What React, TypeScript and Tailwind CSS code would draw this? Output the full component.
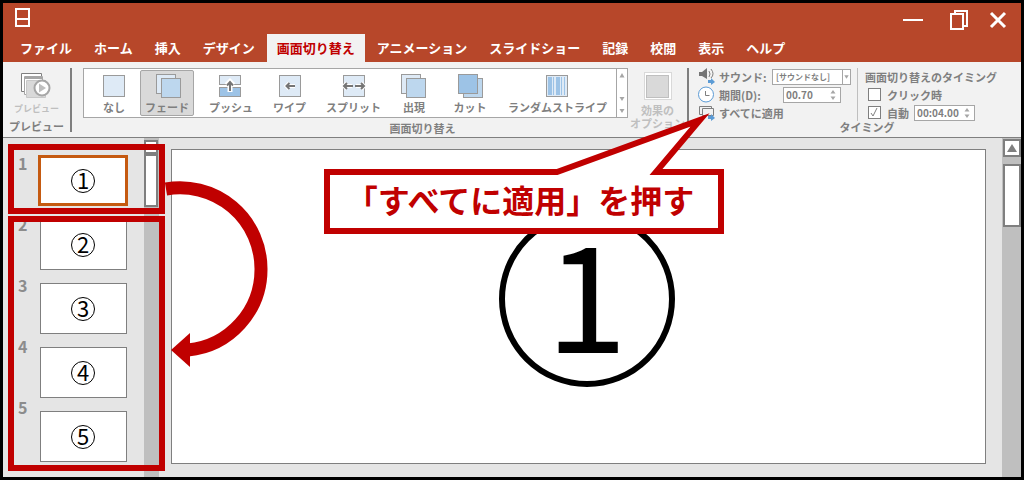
import { ReactNode } from "react";

const tabs = [
  "ファイル",
  "ホーム",
  "挿入",
  "デザイン",
  "画面切り替え",
  "アニメーション",
  "スライドショー",
  "記録",
  "校閲",
  "表示",
  "ヘルプ",
];

const slides = [1, 2, 3, 4, 5];

function Tile({ children }: { children: ReactNode }) {
  return (
    <svg viewBox="0 0 28 24" className="h-6 w-7 shrink-0" strokeWidth="1" stroke="#9a9a9a">
      {children}
    </svg>
  );
}

const transitions = [
  {
    name: "なし",
    width: "w-8",
    icon: <rect x="3.500" y="1.500" width="21" height="21" fill="#deeaf6" />,
  },
  {
    name: "フェード",
    width: "w-[54px]",
    icon: (
      <>
        <rect x="3.500" y="0.500" width="19" height="19" fill="#deeaf6" />
        <rect x="8.500" y="4.500" width="19" height="19" fill="#bdd7ee" />
      </>
    ),
  },
  {
    name: "プッシュ",
    width: "w-[54px]",
    icon: (
      <>
        <rect x="2.500" y="1.500" width="21" height="9" fill="#deeaf6" />
        <rect x="2.500" y="13.500" width="21" height="9" fill="#9dc3e6" />
        <path d="M13 18V8M9.500 11L13 7.500L16.500 11" fill="none" stroke="#fff" strokeWidth="5" />
        <path d="M13 17V9M10 11.500L13 8L16 11.500" fill="none" stroke="#757575" strokeWidth="2" />
      </>
    ),
  },
  {
    name: "ワイプ",
    width: "w-[43px]",
    icon: (
      <>
        <rect x="3.500" y="1.500" width="21" height="21" fill="#deeaf6" />
        <path d="M19 12H11M13.500 9L10.500 12L13.500 15" fill="none" stroke="#fff" strokeWidth="4" />
        <path d="M19 12H11M13.500 9L10.500 12L13.500 15" fill="none" stroke="#757575" strokeWidth="2" />
      </>
    ),
  },
  {
    name: "スプリット",
    width: "w-[65px]",
    icon: (
      <>
        <rect x="3.500" y="1.500" width="21" height="21" fill="#deeaf6" />
        <path d="M3 12H12M16 12H25M7 9L4 12L7 15M21 9L24 12L21 15" fill="none" stroke="#fff" strokeWidth="4" />
        <path d="M4 12H13M15 12H24M7 9L4 12L7 15M21 9L24 12L21 15" fill="none" stroke="#757575" strokeWidth="2" />
      </>
    ),
  },
  {
    name: "出現",
    width: "w-9",
    icon: (
      <>
        <rect x="1.500" y="0.500" width="19" height="19" fill="#deeaf6" />
        <rect x="6.500" y="4.500" width="19" height="19" fill="#bdd7ee" />
      </>
    ),
  },
  {
    name: "カット",
    width: "w-14",
    icon: (
      <>
        <rect x="7.500" y="4.500" width="19" height="19" fill="#bdd7ee" />
        <rect x="2.500" y="0.500" width="19" height="19" fill="#9dc3e6" />
      </>
    ),
  },
  {
    name: "ランダムストライプ",
    width: "w-[99px]",
    icon: (
      <>
        <rect x="2.500" y="1.500" width="21" height="21" fill="#deeaf6" />
        <path d="M4 3h4v18H4zM9 3h1v18H9zM12 3h4v18h-4zM17 3h1v18h-1zM20 3h1v18h-1z" fill="#9dc3e6" stroke="none" />
      </>
    ),
  },
];

function Spinner({ id, value, width }: { id: string; value: string; width: string }) {
  return (
    <span className={`flex h-4 items-center border border-[#a6a6a6] bg-white pr-1 ${width}`}>
      <input
        id={id}
        aria-label={id}
        defaultValue={value}
        className="w-full min-w-0 bg-transparent pl-[2px] text-[10px] leading-3 font-bold text-[#7f7f7f] outline-none"
      />
      <svg viewBox="0 0 6 12" className="h-3 w-[6px] shrink-0" fill="#a6a6a6">
        <path d="M3 1L5.500 4.500H0.500zM3 11L5.500 7.500H0.500z" />
      </svg>
    </span>
  );
}

function Titlebar() {
  return (
    <div className="flex h-[31px] items-start justify-between pt-[5px] pr-[14px] pl-3">
      <button aria-label="上書き保存">
        <svg viewBox="0 0 15 19" className="h-[19px] w-[15px]" fill="none" stroke="#fff" strokeWidth="2">
          <path d="M1 1h13v17H1zM1 11h13" />
        </svg>
      </button>
      <div className="flex items-start gap-5">
        <button aria-label="最小化" className="pr-[6px]">
          <svg viewBox="0 0 20 22" className="h-[22px] w-5" stroke="#fff" strokeWidth="2">
            <path d="M0 12H20" />
          </svg>
        </button>
        <button aria-label="元に戻す">
          <svg viewBox="0 0 20 22" className="h-[22px] w-5" fill="none" stroke="#fff" strokeWidth="2">
            <path d="M2 6h12v15H2zM6 6V3h12v15h-4" />
          </svg>
        </button>
        <button aria-label="閉じる">
          <svg viewBox="0 0 18 22" className="h-[22px] w-[18px]" fill="none" stroke="#fff" strokeWidth="3">
            <path d="M2 5L16 19M16 5L2 19" />
          </svg>
        </button>
      </div>
    </div>
  );
}

function Ribbon() {
  return (
    <div className="flex h-[76px] items-start border-b border-[#7f7f7f] bg-[#f2f2f2] pt-[6px] text-[11px] leading-3 font-bold whitespace-nowrap text-[#7f7f7f]">
      {/* Preview */}
      <section className="flex h-16 w-[67px] flex-col items-center pt-[5px]">
        <button className="flex flex-col items-center gap-1 text-[9px] leading-3 text-[#bfbfbf]">
          <svg viewBox="0 0 30 26" className="h-[26px] w-[30px]" fill="none" strokeWidth="1">
            <path d="M0.500 0.500h20v18h-20z" stroke="#7f7f7f" fill="#fff" />
            <path d="M3.500 3.500h18v18h-18z" stroke="#a6a6a6" fill="#fff" />
            <path d="M4 5h17" stroke="#a6a6a6" strokeWidth="2" />
            <path d="M5.500 7.500h19v17h-19z" stroke="#c8c8c8" fill="#d9d9d9" />
            <circle cx="21" cy="15" r="7.500" fill="#fff" stroke="#a6a6a6" strokeWidth="2" />
            <path d="M18 10.500L25 15L18 19.500z" fill="#bfbfbf" />
          </svg>
          プレビュー
        </button>
        <span className="mt-auto">プレビュー</span>
      </section>
      <div className="h-16 w-[2px] bg-[#7f7f7f]" />

      {/* Transition gallery */}
      <section className="ml-[11px] flex h-[66px] flex-col items-stretch justify-between">
        <div className="flex h-[50px] w-[545px] border border-[#a6a6a6] bg-white">
          <div className="flex flex-1 gap-[10px] pt-px pl-[14px]">
            {transitions.map((t) => (
              <button
                key={t.name}
                className={`flex h-[46px] shrink-0 flex-col items-center gap-[3px] rounded-xs border pt-[3px] ${t.width} ${
                  t.name === "フェード" ? "border-[#a6a6a6] bg-[#d9d9d9]" : "border-transparent"
                }`}
              >
                <Tile>{t.icon}</Tile>
                {t.name}
              </button>
            ))}
          </div>
          <button aria-label="その他の効果" className="border-l border-[#a6a6a6]">
            <svg viewBox="0 0 10 48" className="h-12 w-[10px]" fill="#a6a6a6">
              <path d="M5 4L7.500 8.500H2.500zM5 32L7.500 28H2.500zM5 44L7.500 40H2.500z" />
            </svg>
          </button>
        </div>
        <span className="pl-[134px] text-center">画面切り替え</span>
      </section>

      <section className="flex w-[59px] flex-col items-center pt-1">
        <button className="flex flex-col items-center gap-1 leading-[13px] text-[#bfbfbf]">
          <span className="flex size-7 items-center justify-center border border-[#d9d9d9] bg-white">
            <span className="size-[23px] border border-[#bfbfbf] bg-[#d9d9d9]" />
          </span>
          <span>
            効果の
            <br />
            オプション
          </span>
        </button>
      </section>
      <div className="h-16 w-[2px] bg-[#7f7f7f]" />

      {/* Timing */}
      <section className="flex flex-col items-center pl-2">
        <div className="flex">
          <div className="flex flex-col gap-px pr-[6px]">
            <div className="flex h-[17px] items-center">
              <svg viewBox="0 0 18 17" className="mr-1 h-[17px] w-[18px]" fill="none">
                <path d="M2 4h3l5-4v11l-5-3H2z" fill="#757575" />
                <path d="M12 3q2 3 0 6M14 1q4 5 0 9" stroke="#7f7f7f" />
                <path d="M11 12h3v-2l4 4l-4 3v-2h-3z" fill="#5b9bd5" />
              </svg>
              <label htmlFor="sound" className="w-[53px]">
                サウンド:
              </label>
              <span className="flex h-4 w-[79px] border border-[#a6a6a6] bg-white">
                <select
                  id="sound"
                  className="min-w-0 flex-1 appearance-none bg-transparent pl-[3px] text-[8px] leading-[14px] font-bold outline-none"
                >
                  <option>[サウンドなし]</option>
                </select>
                <svg viewBox="0 0 8 14" className="h-[14px] w-2 border-l border-[#a6a6a6]" fill="#a6a6a6">
                  <path d="M4 9L6.500 5H1.500z" />
                </svg>
              </span>
            </div>
            <div className="flex h-[17px] items-center">
              <svg viewBox="0 0 18 17" className="mr-1 h-[17px] w-[18px]" fill="none">
                <circle cx="9" cy="8.500" r="7.500" fill="#fff" stroke="#5b9bd5" />
                <path d="M8.500 5v4.500h4" stroke="#7f7f7f" />
              </svg>
              <label htmlFor="期間" className="w-16">
                期間(D):
              </label>
              <Spinner id="期間" value="00.70" width="w-[58px]" />
            </div>
            <button className="flex h-[17px] items-center">
              <svg viewBox="0 0 18 17" className="mr-1 h-[17px] w-[18px]" fill="none" stroke="#7f7f7f">
                <path d="M5.500 10.500h-3v-8h12v2M5.500 4.500h11v7h-11z" />
                <path d="M11 12h3v-2l4 4l-4 3v-2h-3z" fill="#5b9bd5" stroke="none" />
              </svg>
              すべてに適用
            </button>
          </div>
          <div className="flex flex-col gap-px border-l border-[#bfbfbf] pl-[7px]">
            <span className="flex h-[17px] items-center">画面切り替えのタイミング</span>
            <label className="flex h-[17px] items-center gap-[6px] pl-[3px]">
              <input type="checkbox" className="size-[13px] appearance-none border border-[#7f7f7f] bg-white" />
              クリック時
            </label>
            <div className="flex h-[17px] items-center pl-[3px]">
              <label className="flex items-center gap-[6px]">
                <span className="relative flex">
                  <input
                    type="checkbox"
                    defaultChecked
                    className="peer size-[13px] appearance-none border border-[#7f7f7f] bg-white"
                  />
                  <svg
                    viewBox="0 0 13 13"
                    className="pointer-events-none absolute inset-0 hidden size-[13px] peer-checked:block"
                    fill="none"
                    stroke="#7f7f7f"
                  >
                    <path d="M3 7l2 3l4-8" />
                  </svg>
                </span>
                自動
              </label>
              <span className="pl-[5px]">
                <Spinner id="自動切り替え時間" value="00:04.00" width="w-[61px]" />
              </span>
            </div>
          </div>
        </div>
        <span className="pl-10">タイミング</span>
      </section>
    </div>
  );
}

function Thumbnails() {
  return (
    <aside className="flex w-[141px] shrink-0 justify-between pt-[17px] pr-4 pb-[14px] pl-[15px]">
      <div className="flex flex-col gap-[45px] text-[16px] leading-4 font-bold text-[#8c8c8c]">
        {slides.map((n) => (
          <span key={n}>{n}</span>
        ))}
      </div>
      <div className="flex flex-col items-center gap-[13px]">
        {slides.map((n) => (
          <button
            key={n}
            aria-label={`スライド ${n}`}
            className={`flex h-[51px] items-center justify-center bg-white text-black ${
              n === 1 ? "w-[90px] border-3 border-[#c55a11]" : "w-[87px] border border-[#7f7f7f]"
            }`}
          >
            <span className="flex size-6 items-center justify-center rounded-full border border-black pb-[3px] text-[22px] leading-none font-normal">
              {n}
            </span>
          </button>
        ))}
      </div>
    </aside>
  );
}

export default function App() {
  return (
    <div className="relative flex min-h-screen flex-col overflow-hidden border-3 border-black bg-[#e5e5e5] font-['Noto_Sans_CJK_JP',sans-serif]">
      <header className="bg-[#b7472a]">
        <Titlebar />
        <nav className="flex h-7 gap-[2px] pl-[7px] text-[13px] font-bold text-white">
          {tabs.map((tab) => (
            <button
              key={tab}
              className={`shrink-0 px-[10px] ${tab === "画面切り替え" ? "bg-[#f2f2f2] text-[#c00000]" : ""}`}
            >
              {tab}
            </button>
          ))}
        </nav>
      </header>
      <Ribbon />

      <main className="relative flex flex-1">
        <Thumbnails />
        <div className="w-[15px] shrink-0 bg-[#bfbfbf] pt-[2px]">
          <div className="h-[14px] w-[14px] border-2 border-[#7f7f7f] bg-white" />
          <div className="h-[53px] w-[14px] border-2 border-[#7f7f7f] bg-white" />
        </div>

        <div className="flex flex-1 pt-[11px] pr-4 pb-[13px] pl-3">
          <div className="flex flex-1 items-center justify-center border border-[#7f7f7f] bg-white pb-4 pl-4">
            <div className="flex size-44 items-center justify-center rounded-full border-6 border-black pb-5 text-[147px] leading-none text-black">
              1
            </div>
          </div>
        </div>

        <div className="w-[19px] shrink-0 bg-[#bfbfbf] pt-px pl-px">
          <div className="flex h-[18px] items-center justify-center border-2 border-[#7f7f7f] bg-white">
            <svg viewBox="0 0 10 8" className="h-2 w-[10px]" fill="#7f7f7f">
              <path d="M5 0L10 8H0z" />
            </svg>
          </div>
          <div className="mt-[7px] h-[63px] border-2 border-[#7f7f7f] bg-white" />
        </div>

        {/* Highlight frames around the source slide and the slides it applies to */}
        <div className="pointer-events-none absolute top-[6px] left-[5px] h-[70px] w-[157px] border-6 border-[#c00000]" />
        <div className="pointer-events-none absolute top-[78px] left-[5px] h-[255px] w-[157px] border-6 border-[#c00000]" />
        <svg viewBox="0 0 110 200" className="pointer-events-none absolute top-8 left-[162px] h-[200px] w-[110px]">
          <path d="M1 19A81 81 0 0 1 96 99A81 81 0 0 1 23 180" fill="none" stroke="#c00000" strokeWidth="13" />
          <path d="M6 180L25 163V197z" fill="#c00000" />
        </svg>
      </main>

      {/* Callout pointing at the apply-to-all button */}
      <div className="pointer-events-none absolute top-[105px] left-[321px] h-[126px] w-[400px] pt-[61px]">
        <svg viewBox="0 0 400 126" className="absolute inset-0 h-[126px] w-[400px]">
          <path
            d="M3 64H233L376 12L332 64H397V123H3z"
            fill="#fff"
            stroke="#c00000"
            strokeWidth="6"
            strokeMiterlimit="10"
          />
        </svg>
        <p className="relative flex h-[65px] items-center justify-center pr-2 pb-[6px] text-[32px] leading-8 font-bold whitespace-nowrap text-[#c00000]">
          「すべてに適用」を押す
        </p>
      </div>
    </div>
  );
}
